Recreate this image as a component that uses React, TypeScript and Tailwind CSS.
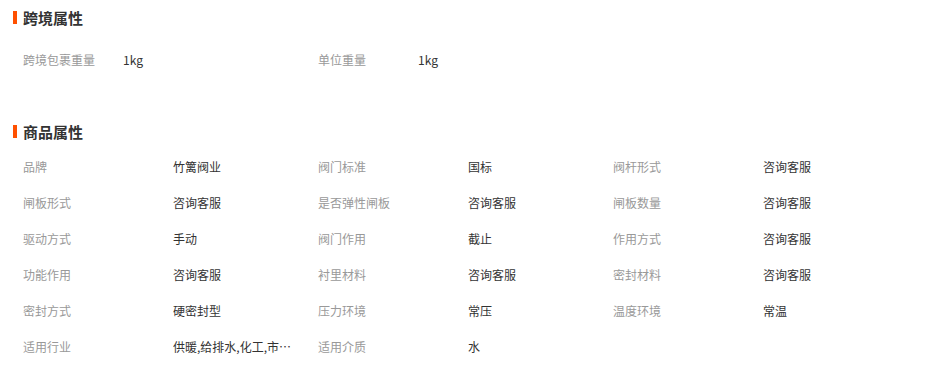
import React from "react";

const font = { fontFamily: '"Noto Sans CJK SC", "Liberation Sans", sans-serif' };

const product: [string, string][] = [
  ["品牌", "竹篱阀业"],
  ["阀门标准", "国标"],
  ["阀杆形式", "咨询客服"],
  ["闸板形式", "咨询客服"],
  ["是否弹性闸板", "咨询客服"],
  ["闸板数量", "咨询客服"],
  ["驱动方式", "手动"],
  ["阀门作用", "截止"],
  ["作用方式", "咨询客服"],
  ["功能作用", "咨询客服"],
  ["衬里材料", "咨询客服"],
  ["密封材料", "咨询客服"],
  ["密封方式", "硬密封型"],
  ["压力环境", "常压"],
  ["温度环境", "常温"],
  ["适用行业", "供暖,给排水,化工,市政,电力,冶金,石油"],
  ["适用介质", "水"],
];

function Title({ text }: { text: string }) {
  return (
    <div className="h-[34px] flex items-center pl-[13px]">
      <span className="w-[4px] h-[13px] bg-[#ff5000] mr-[6px]" />
      <span className="text-[15px] font-bold text-[#333] leading-none">{text}</span>
    </div>
  );
}

export default function App() {
  return (
    <div className="w-[934px] h-[365px] bg-white overflow-hidden" style={font}>
      <Title text="跨境属性" />
      <div className="mt-[8px] mb-[36px] pl-[23px] grid grid-cols-[295px_295px] text-[12px]">
        <div className="h-[36px] flex items-center">
          <span className="w-[100px] text-[#999]">跨境包裹重量</span>
          <span className="text-[#333]">1kg</span>
        </div>
        <div className="h-[36px] flex items-center">
          <span className="w-[100px] text-[#999]">单位重量</span>
          <span className="text-[#333]">1kg</span>
        </div>
      </div>
      <Title text="商品属性" />
      <div className="mt-[1px] pl-[23px] grid grid-cols-[295px_295px_295px] text-[12px]">
        {product.map(([k, v]) => (
          <div key={k} className="h-[36px] flex items-center">
            <span className="w-[150px] shrink-0 text-[#999]">{k}</span>
            <span className="w-[124px] truncate text-[#333]" title={v}>{v}</span>
          </div>
        ))}
      </div>
    </div>
  );
}
